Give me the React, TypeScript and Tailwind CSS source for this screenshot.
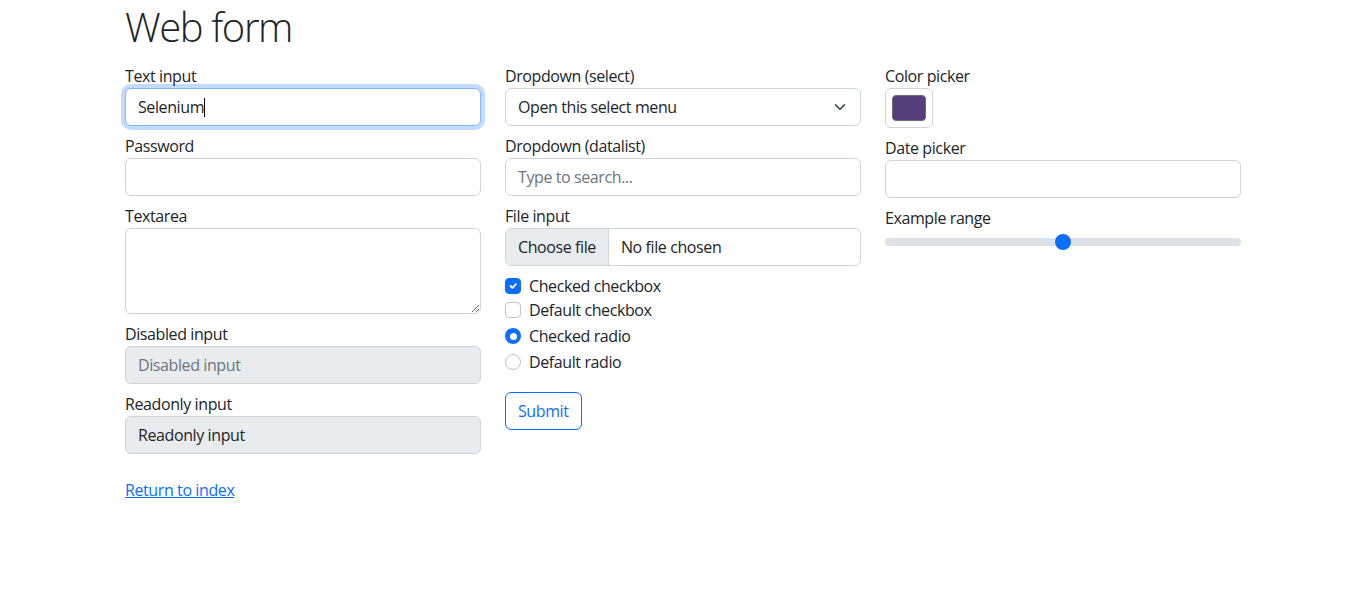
import React from "react";

const inputBase =
  "block w-full h-[38px] px-3 border rounded-md text-base leading-6 outline-none";

function Label({ text, children }: { text: string; children: React.ReactNode }) {
  return (
    <label className="block w-full mb-2">
      <span className="block h-6 leading-6">{text}</span>
      {children}
    </label>
  );
}

function Checkbox({ checked, label }: { checked?: boolean; label: string }) {
  return (
    <div className="flex items-center h-6">
      {checked ? (
        <span className="flex items-center justify-center w-4 h-4 rounded-[4px] bg-[#0d6efd] border border-[#0d6efd]">
          <svg width="12" height="12" viewBox="0 0 20 20">
            <path d="m6 10 3 3 6-6" fill="none" stroke="#fff" strokeWidth="3" strokeLinecap="round" strokeLinejoin="round" />
          </svg>
        </span>
      ) : (
        <span className="block w-4 h-4 rounded-[4px] bg-white border border-[#c4c4c4]" />
      )}
      <span className="ml-2">{label}</span>
    </div>
  );
}

function Radio({ checked, label }: { checked?: boolean; label: string }) {
  return (
    <div className="flex items-center h-6">
      {checked ? (
        <span className="flex items-center justify-center w-4 h-4 rounded-full bg-[#0d6efd]">
          <span className="block w-[7px] h-[7px] rounded-full bg-white" />
        </span>
      ) : (
        <span className="block w-4 h-4 rounded-full bg-white border border-[#c4c4c4]" />
      )}
      <span className="ml-2">{label}</span>
    </div>
  );
}

export default function App() {
  return (
    <div
      className="min-h-[589px] bg-white text-[#212529] text-base leading-6 tracking-[-0.4px]"
      style={{ fontFamily: '"Open Sans", "Noto Sans", sans-serif' }}
    >
      <div className="mx-auto w-[1140px] px-3">
        <h1 className="h-[51px] pt-[3px] text-[40px] leading-[48px] font-light tracking-[-1.4px] mb-[13px]">Web form</h1>
        <div className="grid grid-cols-3 gap-x-6">
          {/* Column 1 */}
          <div>
            <Label text="Text input">
              <div className={inputBase + " flex items-center bg-white text-[#212529] border-[#86b7fe] shadow-[0_0_0_4px_rgba(13,110,253,0.25)]"}>
                <span>Selenium</span>
                <span className="block w-px h-[19px] bg-black" />
              </div>
            </Label>
            <Label text="Password">
              <input type="password" className={inputBase + " bg-white text-[#212529] border-[#ced4da]"} />
            </Label>
            <Label text="Textarea">
              <textarea className="block w-full h-[86px] px-3 py-1.5 border border-[#ced4da] rounded-md bg-white outline-none resize-y" />
            </Label>
            <Label text="Disabled input">
              <div className={inputBase + " flex items-center bg-[#e9ecef] border-[#ced4da] text-[#6c757d]"}>Disabled input</div>
            </Label>
            <Label text="Readonly input">
              <div className={inputBase + " flex items-center bg-[#e9ecef] border-[#ced4da] text-[#212529]"}>Readonly input</div>
            </Label>
          </div>

          {/* Column 2 */}
          <div>
            <Label text="Dropdown (select)">
              <div className={inputBase + " flex items-center justify-between bg-white text-[#212529] border-[#ced4da]"}>
                <span>Open this select menu</span>
                <svg width="16" height="12" viewBox="0 0 16 16">
                  <path d="m2 5 6 6 6-6" fill="none" stroke="#343a40" strokeWidth="2" strokeLinecap="round" strokeLinejoin="round" />
                </svg>
              </div>
            </Label>
            <Label text="Dropdown (datalist)">
              <div className={inputBase + " flex items-center bg-white border-[#ced4da] text-[#6c757d]"}>
                <span>Type to search...</span>
              </div>
            </Label>
            <Label text="File input">
              <div className="flex w-full h-[38px] border border-[#ced4da] rounded-md overflow-hidden bg-white">
                <span className="flex items-center px-3 bg-[#e9ecef] border-r border-[#ced4da]">Choose file</span>
                <span className="flex items-center px-3">No file chosen</span>
              </div>
            </Label>
            <div className="flex flex-col">
              <Checkbox checked label="Checked checkbox" />
              <Checkbox label="Default checkbox" />
              <div className="mt-0.5" />
              <Radio checked label="Checked radio" />
              <div className="mt-0.5" />
              <Radio label="Default radio" />
            </div>
            <button className="mt-[18px] h-[38px] px-3 border border-[#0d6efd] rounded-md text-[#0d6efd] bg-white">
              Submit
            </button>
          </div>

          {/* Column 3 */}
          <div>
            <Label text="Color picker">
              <div className="flex items-center justify-center w-12 h-10 border border-[#ced4da] rounded-md bg-white">
                <span className="block w-[34px] h-[26px] rounded-[4px] bg-[#563d7c] border border-[#6b6b6b]" />
              </div>
            </Label>
            <Label text="Date picker">
              <div className={inputBase + " bg-white border-[#ced4da]"} />
            </Label>
            <Label text="Example range">
              <div className="relative h-6 flex items-center">
                <div className="w-full h-2 rounded-full bg-[#dee2e6]" />
                <span className="absolute left-[170px] top-1 w-4 h-4 rounded-full bg-[#0d6efd]" />
              </div>
            </Label>
          </div>
        </div>
        <div className="pt-4">
          <a href="#" className="text-[#0d6efd] underline leading-6">Return to index</a>
        </div>
      </div>
    </div>
  );
}
